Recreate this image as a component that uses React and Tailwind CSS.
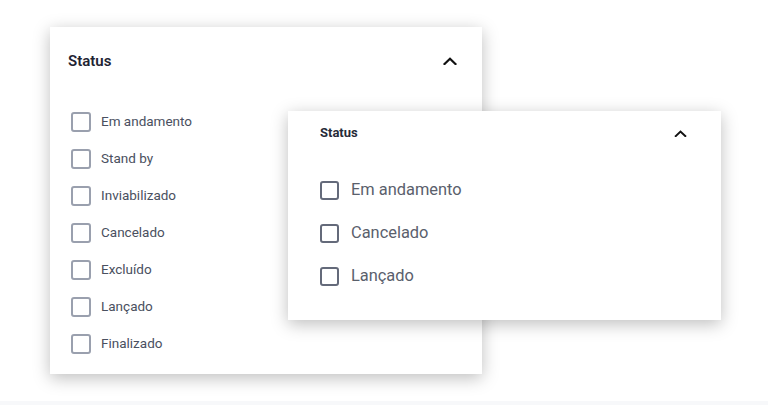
import React from "react";

function Chevron({ className }) {
  return (
    <svg className={className} viewBox="0 0 14 8" fill="none">
      <path d="M1.5 7L7 1.8L12.5 7" stroke="#111" strokeWidth="2.2" strokeLinecap="square" />
    </svg>
  );
}

function Row1({ label }) {
  return (
    <div className="flex h-[37px] items-center">
      <span className="ml-[21px] box-border h-[20px] w-[20px] rounded-[3px] border-2 border-[#9aa0ae]" />
      <span className="ml-[10px] text-[13.5px] text-[#4a5060]">{label}</span>
    </div>
  );
}

function Row2({ label }) {
  return (
    <div className="flex h-[43px] items-center">
      <span className="ml-[32px] box-border h-[19px] w-[19px] rounded-[3px] border-2 border-[#646a7a]" />
      <span className="ml-[12px] text-[16.4px] text-[#5a606c]">{label}</span>
    </div>
  );
}

export default function App() {
  return (
    <div className="relative h-[405px] w-[768px] overflow-hidden bg-white" style={{ fontFamily: "Roboto, 'Noto Sans', sans-serif" }}>
      <div className="absolute left-[50px] top-[27px] h-[347px] w-[432px] bg-white shadow-[0_4px_16px_rgba(0,0,0,0.26)]">
        <div className="flex h-[68px] items-center justify-between pl-[18px] pr-[25px]">
          <span className="text-[15px] font-semibold text-[#1f2433]">Status</span>
          <Chevron className="h-[8px] w-[14px]" />
        </div>
        <div className="pt-[8px]">
          {["Em andamento", "Stand by", "Inviabilizado", "Cancelado", "Excluído", "Lançado", "Finalizado"].map((l) => (
            <Row1 key={l} label={l} />
          ))}
        </div>
      </div>
      <div className="absolute left-[288px] top-[111px] h-[209px] w-[433px] bg-white shadow-[0_4px_16px_rgba(0,0,0,0.26)]">
        <div className="flex h-[44px] items-center justify-between pl-[32px] pr-[34px]">
          <span className="text-[13px] font-bold text-[#262b38]">Status</span>
          <Chevron className="h-[7px] w-[13px]" />
        </div>
        <div className="pt-[14px]">
          {["Em andamento", "Cancelado", "Lançado"].map((l) => (
            <Row2 key={l} label={l} />
          ))}
        </div>
      </div>
      <div className="absolute bottom-0 left-0 h-[4px] w-full bg-[#f7f8fa]" />
    </div>
  );
}
